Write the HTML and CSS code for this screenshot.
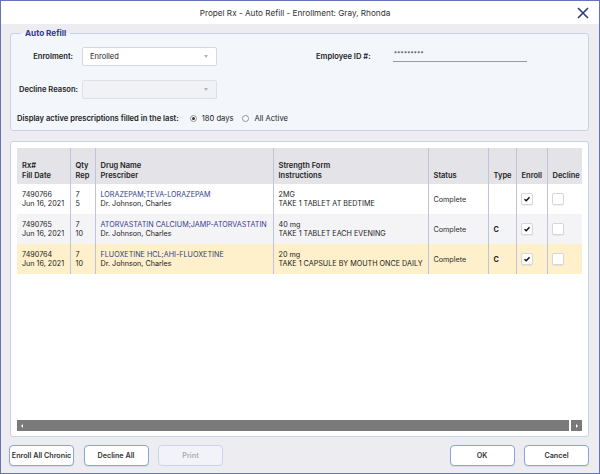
FILE: index.html
```html
<!DOCTYPE html>
<html>
<head>
<meta charset="utf-8">
<title>Propel Rx - Auto Refill - Enrollment</title>
<link rel="stylesheet" href="styles.css">
</head>
<body>
<div class="window">
  <header class="titlebar">
    <span class="title">Propel Rx - Auto Refill - Enrollment: Gray, Rhonda</span>
    <svg class="close" width="12" height="12" viewBox="0 0 12 12"><path d="M1 1L11 11M11 1L1 11" stroke="#2c3a78" stroke-width="1.6" fill="none"/></svg>
  </header>
  <div class="content">
    <fieldset class="refill">
      <legend>Auto Refill</legend>
      <div class="form">
        <label class="lbl">Enrolment:</label>
        <div class="select"><span>Enrolled</span><i class="caret"></i></div>
        <div></div>
        <label class="lbl-emp">Employee ID #:</label>
        <div class="pw">*********</div>
        <label class="lbl wide">Decline Reason:</label>
        <div class="select disabled"><span></span><i class="caret"></i></div>
        <div class="radio-row">
          <span class="q">Display active prescriptions filled in the last:</span>
          <span class="radio"><i class="dot on"></i>180 days</span>
          <span class="radio"><i class="dot"></i>All Active</span>
        </div>
      </div>
    </fieldset>

    <section class="panel">
      <table>
        <colgroup>
          <col class="c-rx"><col class="c-qty"><col class="c-drug"><col class="c-str"><col class="c-status"><col class="c-type"><col class="c-enroll"><col class="c-decline">
        </colgroup>
        <thead>
          <tr>
            <th>Rx#<br>Fill Date</th>
            <th>Qty<br>Rep</th>
            <th>Drug Name<br>Prescriber</th>
            <th>Strength Form<br>Instructions</th>
            <th>Status</th>
            <th>Type</th>
            <th>Enroll</th>
            <th>Decline</th>
          </tr>
        </thead>
        <tbody>
          <tr>
            <td>7490766<br>Jun 16, 2021</td>
            <td>7<br>5</td>
            <td><span class="drug">LORAZEPAM;TEVA-LORAZEPAM</span><br>Dr. Johnson, Charles</td>
            <td>2MG<br>TAKE 1 TABLET AT BEDTIME</td>
            <td class="status">Complete</td>
            <td class="type"></td>
            <td class="chk"><span class="cb"><svg viewBox="0 0 12 12"><path d="M3 6.2L5.1 8.2L9 3.8" stroke="#111" stroke-width="1.7" fill="none"/></svg></span></td>
            <td class="chk"><span class="cb"></span></td>
          </tr>
          <tr class="alt">
            <td>7490765<br>Jun 16, 2021</td>
            <td>7<br>10</td>
            <td><span class="drug">ATORVASTATIN CALCIUM;JAMP-ATORVASTATIN</span><br>Dr. Johnson, Charles</td>
            <td>40 mg<br>TAKE 1 TABLET EACH EVENING</td>
            <td class="status">Complete</td>
            <td class="type">C</td>
            <td class="chk"><span class="cb"><svg viewBox="0 0 12 12"><path d="M3 6.2L5.1 8.2L9 3.8" stroke="#111" stroke-width="1.7" fill="none"/></svg></span></td>
            <td class="chk"><span class="cb"></span></td>
          </tr>
          <tr class="sel">
            <td>7490764<br>Jun 16, 2021</td>
            <td>7<br>10</td>
            <td><span class="drug">FLUOXETINE HCL;AHI-FLUOXETINE</span><br>Dr. Johnson, Charles</td>
            <td>20 mg<br>TAKE 1 CAPSULE BY MOUTH ONCE DAILY</td>
            <td class="status">Complete</td>
            <td class="type">C</td>
            <td class="chk"><span class="cb"><svg viewBox="0 0 12 12"><path d="M3 6.2L5.1 8.2L9 3.8" stroke="#111" stroke-width="1.7" fill="none"/></svg></span></td>
            <td class="chk"><span class="cb"></span></td>
          </tr>
        </tbody>
      </table>
      <div class="spacer"></div>
      <div class="hscroll">
        <div class="track"><i class="arr-l"></i></div>
        <div class="sbtn"><i class="arr-r"></i></div>
      </div>
    </section>

    <footer class="actions">
      <button>Enroll All Chronic</button>
      <button>Decline All</button>
      <button disabled>Print</button>
      <button class="push">OK</button>
      <button>Cancel</button>
    </footer>
  </div>
</div>
</body>
</html>
```

FILE: styles.css
```css
* { box-sizing: border-box; }

body {
  margin: 0;
  font-family: Inter, "Noto Sans", sans-serif;
  font-size: 7.2px;
  color: #222;
}

.window {
  width: 600px;
  height: 474px;
  border: 1px solid #6672bb;
  background: #ececf1;
  display: flex;
  flex-direction: column;
}

.titlebar {
  height: 23px;
  background: #fff;
  display: grid;
  grid-template-columns: 1fr auto 1fr;
  align-items: center;
  padding-right: 10px;
}

.title {
  grid-column: 2;
  font-size: 8.2px;
  color: #333;
}

.close {
  grid-column: 3;
  justify-self: end;
}

.content {
  flex: 1;
  display: flex;
  flex-direction: column;
  padding: 4px 10px 7px 9px;
}

/* Auto refill fieldset */
.refill {
  margin: 0;
  padding: 9px 6px 7px;
  border: 1px solid #c8d2e6;
  border-radius: 3px;
  background: #f3f6fb;
}

.refill legend {
  margin-left: 4px;
  padding: 0 4px;
  font-size: 8.2px;
  line-height: 10px;
  font-weight: 700;
  color: #2f3b8f;
}

.form {
  display: grid;
  grid-template-columns: 65px 135px 99px 77px 134px;
  grid-template-rows: 19px 19px 10px;
  row-gap: 14px;
  align-items: center;
  font-size: 7.6px;
}

.lbl {
  text-align: right;
  padding-right: 9px;
  font-weight: 600;
  white-space: nowrap;
}

.lbl.wide { padding-right: 4px; }

.lbl-emp { font-weight: 600; }

.select {
  height: 19px;
  background: #fff;
  border: 1px solid #d4d8e2;
  border-radius: 2px;
  display: flex;
  align-items: center;
  justify-content: space-between;
  padding: 0 8px 0 7px;
  font-size: 7.5px;
}

.select.disabled {
  background: #f1f2f6;
  border-color: #dde0e8;
}

.caret {
  width: 0;
  height: 0;
  border-left: 2.5px solid transparent;
  border-right: 2.5px solid transparent;
  border-top: 3px solid #aeb2bd;
}

.pw {
  align-self: start;
  height: 15px;
  border-bottom: 1px solid #9a9a9a;
  padding-left: 1px;
  line-height: 13px;
  font-size: 6px;
  letter-spacing: 0.3px;
}

.radio-row {
  grid-column: 1 / -1;
  margin-top: 1px;
  display: flex;
  align-items: center;
}

.q {
  font-weight: 600;
  margin-right: 11px;
}

.radio {
  display: flex;
  align-items: center;
  gap: 5px;
  margin-right: 9px;
}

.dot {
  width: 7px;
  height: 7px;
  border: 1px solid #8e8e8e;
  border-radius: 50%;
  background: #fff;
  display: flex;
  align-items: center;
  justify-content: center;
}

.dot.on::after {
  content: "";
  width: 3px;
  height: 3px;
  border-radius: 50%;
  background: #333;
}

/* Table panel */
.panel {
  flex: 1;
  margin-top: 10px;
  background: #fff;
  border: 1px solid #c8d2e6;
  border-radius: 3px;
  padding: 6px 6px 5px;
  display: flex;
  flex-direction: column;
}

table {
  width: 565px;
  border-collapse: collapse;
  table-layout: fixed;
}

.c-rx { width: 53px; }
.c-qty { width: 25px; }
.c-drug { width: 178px; }
.c-str { width: 155px; }
.c-status { width: 60px; }
.c-type { width: 28px; }
.c-enroll { width: 31px; }
.c-decline { width: 35px; }

th {
  background: #e3e3e8;
  height: 36px;
  vertical-align: bottom;
  text-align: left;
  font-weight: 600;
  font-size: 7.5px;
  line-height: 9.5px;
  padding: 0 0 4px 5px;
  white-space: nowrap;
  color: #222;
}

td {
  height: 30px;
  padding: 0 0 0 5px;
  line-height: 9px;
  vertical-align: middle;
  white-space: nowrap;
  color: #222;
}

th + th, td + td { border-left: 1px solid #bfc3dc; }

tr.alt td { background: #f4f4f7; }
tr.sel td { background: #fdf0cb; }

.drug { color: #343d8c; }

.status { color: #2e2e2e; }

.type { font-weight: 700; }

td.chk { padding-left: 4px; }

.cb {
  display: block;
  width: 12px;
  height: 12px;
  border: 1px solid #d6d6dd;
  border-radius: 2px;
  background: #fff;
  box-shadow: 0 1px 1px rgba(0,0,0,0.06);
}

.cb svg { display: block; width: 10px; height: 10px; }

.spacer { flex: 1; }

.hscroll {
  height: 11px;
  display: flex;
  gap: 2px;
}

.track {
  flex: 1;
  background: #7a7a7a;
  display: flex;
  align-items: center;
  padding-left: 4px;
}

.sbtn {
  width: 11px;
  background: #7a7a7a;
  display: flex;
  align-items: center;
  justify-content: center;
}

.arr-l, .arr-r {
  width: 0;
  height: 0;
  border-top: 2px solid transparent;
  border-bottom: 2px solid transparent;
}

.arr-l { border-right: 2px solid #fff; }
.arr-r { border-left: 2px solid #fff; }

/* Buttons */
.actions {
  margin-top: 8px;
  margin-left: -1px;
  height: 21px;
  display: flex;
  gap: 9.5px;
}

.actions button {
  width: 65px;
  height: 21px;
  font-family: inherit;
  font-size: 7.2px;
  font-weight: 600;
  color: #333;
  background: #fff;
  border: 1px solid #8aa5d8;
  border-radius: 4px;
  box-shadow: 0 1px 1px rgba(0,0,0,0.08);
  padding: 0;
}

.actions button:disabled {
  background: #f2f3f8;
  border-color: #cad4ec;
  color: #a8aab6;
  box-shadow: none;
}

.actions .push { margin-left: auto; }
```
